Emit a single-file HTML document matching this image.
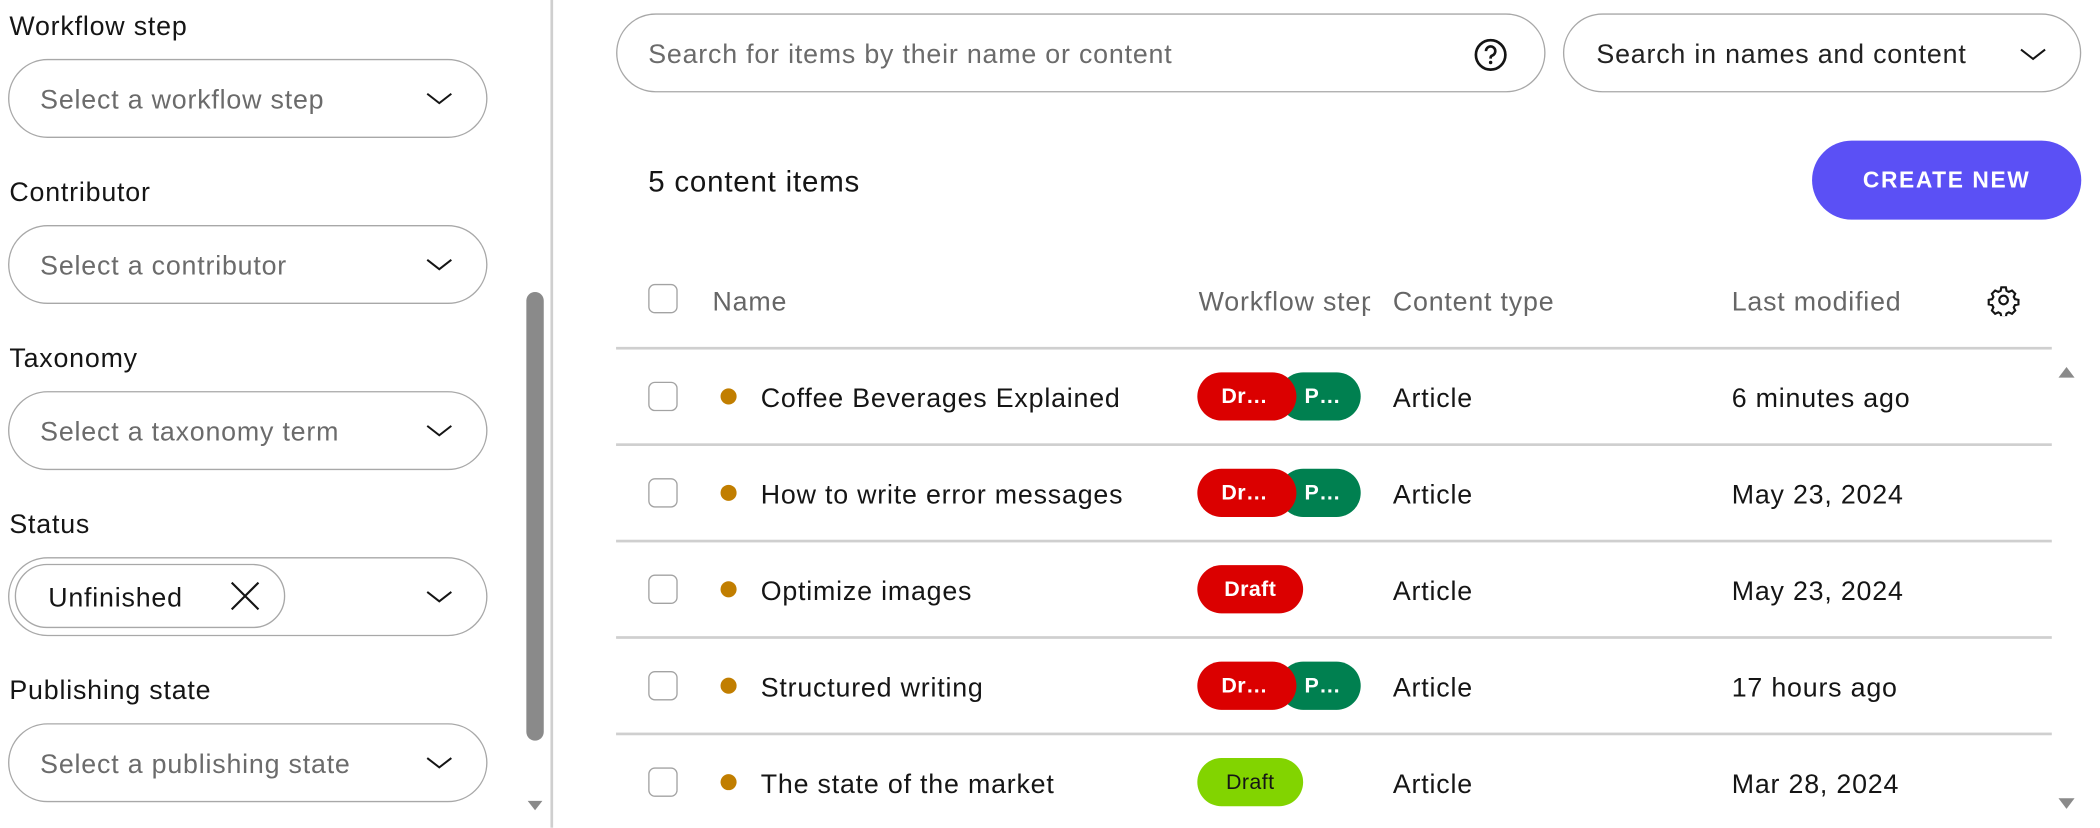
<!DOCTYPE html>
<html><head><meta charset="utf-8"><style>
html,body{margin:0;padding:0;background:#fff;overflow:hidden;width:2100px;height:828px}
#w{position:absolute;left:0;top:0;width:1568px;height:618px;transform:scale(1.33929);transform-origin:0 0;font-family:"Liberation Sans",sans-serif;color:#151515;letter-spacing:0.6px}
.a{position:absolute}
.lbl{position:absolute;left:7px;font-size:20px;line-height:24px}
.box{position:absolute;left:6px;width:356px;height:57px;border:1.5px solid #a8a8a8;border-radius:30px;box-sizing:content-box}
.ph{position:absolute;left:23px;top:18px;font-size:20px;color:#6b6b6b;line-height:24px;white-space:nowrap}
.cb{position:absolute;left:484px;width:20px;height:20px;border:1.5px solid #a3a3a3;border-radius:5px}
.hd{position:absolute;font-size:20px;color:#666;line-height:24px;white-space:nowrap}
.row{position:absolute;left:460px;width:1072px;height:2px;background:#cfcfcf}
.tx{position:absolute;font-size:20px;line-height:24px;white-space:nowrap}
.dot{position:absolute;left:538px;width:12px;height:12px;border-radius:6px;background:#c17e00}
.pill{position:absolute;height:36px;border-radius:18px;color:#fff;font-size:16px;line-height:37px;box-sizing:border-box;letter-spacing:0.3px;font-weight:bold}
</style></head><body><div id="w">
<div class="lbl" style="top:8px">Workflow step</div>
<div class="box" style="top:44px"><div class="ph">Select a workflow step</div></div>
<div class="lbl" style="top:132px">Contributor</div>
<div class="box" style="top:168px"><div class="ph">Select a contributor</div></div>
<div class="lbl" style="top:256px">Taxonomy</div>
<div class="box" style="top:292px"><div class="ph">Select a taxonomy term</div></div>
<div class="lbl" style="top:380px">Status</div>
<div class="box" style="top:416px"><div class="a" style="left:4px;top:4px;width:200px;height:46px;border:1.5px solid #a8a8a8;border-radius:24px"><div class="a" style="left:24px;top:13px;font-size:20px;line-height:24px">Unfinished</div>
<svg class="a" style="left:160px;top:12px" width="22" height="22" viewBox="0 0 22 22"><path d="M1 1L21 21M21 1L1 21" stroke="#151515" stroke-width="1.6"/></svg></div></div>
<div class="lbl" style="top:504px">Publishing state</div>
<div class="box" style="top:540px"><div class="ph">Select a publishing state</div></div>
<svg class="a" style="left:0;top:0" width="411" height="618">
<g fill="none" stroke="#151515" stroke-width="1.5">
<path d="M319 70l9 7 9-7"/><path d="M319 194l9 7 9-7"/><path d="M319 318l9 7 9-7"/><path d="M319 442l9 7 9-7"/><path d="M319 566l9 7 9-7"/></g>
<rect x="393" y="218" width="13" height="335" rx="6.5" fill="#8a8a8a"/>
<path d="M394 598h11l-5.5 7z" fill="#8a8a8a"/>
</svg>
<div class="a" style="left:411px;top:0;width:1.5px;height:618px;background:#cfcfcf"></div>
<div class="a" style="left:460px;top:10px;width:692px;height:57px;border:1.5px solid #a8a8a8;border-radius:30px"><div class="a" style="left:23px;top:18px;font-size:20px;color:#6b6b6b;line-height:24px">Search for items by their name or content</div>
<svg class="a" style="left:639px;top:17px" width="26" height="26" viewBox="0 0 26 26"><circle cx="13" cy="13" r="11" fill="none" stroke="#151515" stroke-width="2"/><path d="M9.5 10.2a3.5 3.5 0 1 1 4.6 3.3c-.8.3-1.1.8-1.1 1.7v.6" fill="none" stroke="#151515" stroke-width="2"/><circle cx="13" cy="18.7" r="1.3" fill="#151515"/></svg></div>
<div class="a" style="left:1167px;top:10px;width:385px;height:57px;border:1.5px solid #a8a8a8;border-radius:30px"><div class="a" style="left:24px;top:18px;font-size:20px;color:#222;line-height:24px">Search in names and content</div>
<svg class="a" style="left:339px;top:23px" width="24" height="14"><path d="M2 3l9 7 9-7" fill="none" stroke="#151515" stroke-width="1.5"/></svg></div>
<div class="a" style="left:484px;top:123px;font-size:22px;line-height:26px">5 content items</div>
<div class="a" style="left:1353px;top:105px;width:201px;height:59px;border-radius:30px;background:#5b50f5;color:#fff;font-weight:bold;font-size:17px;letter-spacing:1.2px;line-height:60px;text-align:center">CREATE NEW</div>
<div class="cb" style="top:212px"></div>
<div class="hd" style="left:532px;top:214px">Name</div>
<div class="hd" style="left:895px;top:214px;width:128px;overflow:hidden">Workflow step</div>
<div class="hd" style="left:1040px;top:214px">Content type</div>
<div class="hd" style="left:1293px;top:214px">Last modified</div>
<svg class="a" style="left:1484px;top:212px" width="24" height="24" viewBox="0 0 24 24"><path fill="none" stroke="#151515" stroke-width="1.6" d="M10.3 2.5h3.4l.5 2.6 1.7.9 2.4-1.1 2.4 2.4-1.1 2.4.9 1.7 2.6.5v3.4l-2.6.5-.9 1.7 1.1 2.4-2.4 2.4-2.4-1.1-1.7.9-.5 2.6h-3.4l-.5-2.6-1.7-.9-2.4 1.1-2.4-2.4 1.1-2.4-.9-1.7-2.6-.5v-3.4l2.6-.5.9-1.7-1.1-2.4 2.4-2.4 2.4 1.1 1.7-.9z"/><circle cx="12" cy="12" r="3.2" fill="none" stroke="#151515" stroke-width="1.6"/></svg>
<div class="row" style="top:259px"></div>
<div class="row" style="top:331px"></div>
<div class="row" style="top:403px"></div>
<div class="row" style="top:475px"></div>
<div class="row" style="top:547px"></div>
<svg class="a" style="left:1535px;top:270px" width="16" height="340"><path d="M2 12h12l-6-8z" fill="#8a8a8a"/><path d="M2 326h12l-6 8z" fill="#8a8a8a"/></svg>

<div class="cb" style="top:285px"></div><div class="dot" style="top:290px"></div><div class="tx" style="left:568px;top:286px">Coffee Beverages Explained</div>
<div class="pill" style="left:955px;top:278px;width:61px;background:#008050;padding-left:19px">P…</div><div class="pill" style="left:894px;top:278px;width:74px;background:#db0000;padding-left:18px">Dr…</div>
<div class="tx" style="left:1040px;top:286px">Article</div><div class="tx" style="left:1293px;top:286px">6 minutes ago</div>

<div class="cb" style="top:357px"></div><div class="dot" style="top:362px"></div><div class="tx" style="left:568px;top:358px">How to write error messages</div>
<div class="pill" style="left:955px;top:350px;width:61px;background:#008050;padding-left:19px">P…</div><div class="pill" style="left:894px;top:350px;width:74px;background:#db0000;padding-left:18px">Dr…</div>
<div class="tx" style="left:1040px;top:358px">Article</div><div class="tx" style="left:1293px;top:358px">May 23, 2024</div>

<div class="cb" style="top:429px"></div><div class="dot" style="top:434px"></div><div class="tx" style="left:568px;top:430px">Optimize images</div>
<div class="pill" style="left:894px;top:422px;width:79px;background:#db0000;text-align:center">Draft</div>
<div class="tx" style="left:1040px;top:430px">Article</div><div class="tx" style="left:1293px;top:430px">May 23, 2024</div>

<div class="cb" style="top:501px"></div><div class="dot" style="top:506px"></div><div class="tx" style="left:568px;top:502px">Structured writing</div>
<div class="pill" style="left:955px;top:494px;width:61px;background:#008050;padding-left:19px">P…</div><div class="pill" style="left:894px;top:494px;width:74px;background:#db0000;padding-left:18px">Dr…</div>
<div class="tx" style="left:1040px;top:502px">Article</div><div class="tx" style="left:1293px;top:502px">17 hours ago</div>

<div class="cb" style="top:573px"></div><div class="dot" style="top:578px"></div><div class="tx" style="left:568px;top:574px">The state of the market</div>
<div class="pill" style="left:894px;top:566px;width:79px;background:#82d400;color:#151515;text-align:center;font-weight:normal">Draft</div>
<div class="tx" style="left:1040px;top:574px">Article</div><div class="tx" style="left:1293px;top:574px">Mar 28, 2024</div>
</div></body></html>
